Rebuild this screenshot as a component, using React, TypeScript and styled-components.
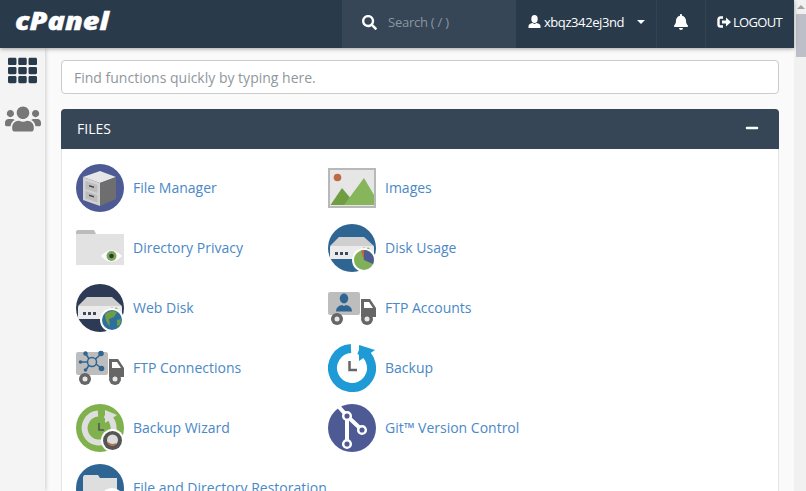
import React from "react";
import styled, { createGlobalStyle } from "styled-components";
import { FaBell, FaMinus, FaSearch, FaTh, FaUsers } from "react-icons/fa";

const GlobalStyle = createGlobalStyle`
    html, body {
        margin: 0;
        height: 100%;
        overflow: hidden;
    }
    body {
        font-family: "Open Sans", "Liberation Sans", sans-serif;
        font-size: 14px;
        background: #fafafa;
    }
`;

const Shell = styled.div`
    display: flex;
    height: 100vh;
    overflow: hidden;
`;

const Page = styled.div`
    flex: 1;
    min-width: 0;
    display: flex;
    flex-direction: column;
`;

const Scrollbar = styled.div`
    width: 12px;
    flex: none;
    background: #f1f1f1;
    display: flex;
    flex-direction: column;
    align-items: flex-end;
`;

const ScrollArrow = styled.div`
    width: 0;
    height: 0;
    margin: 5px 1px 5px 0;
    border-left: 4px solid transparent;
    border-right: 4px solid transparent;
    border-bottom: 4px solid #a3a3a3;
`;

const ScrollThumb = styled.div`
    width: 10px;
    height: 43px;
    background: #bcbfc7;
`;

const Header = styled.header`
    height: 48px;
    flex: none;
    display: flex;
    background: #293a4a;
    box-shadow: 0 1px 4px rgba(0, 0, 0, 0.35);
    position: relative;
    z-index: 2;
    color: #fff;
`;

const Logo = styled.a`
    margin-left: 15px;
    margin-right: auto;
    align-self: center;
    font-size: 24px;
    line-height: 30px;
    font-weight: 800;
    font-style: italic;
    margin-top: -6px;
    color: #fff;
    -webkit-text-stroke: 0.4px #fff;
    transform: scaleX(1.2);
    transform-origin: left center;
`;

const SearchBlock = styled.div`
    width: 174px;
    display: flex;
    align-items: center;
    padding: 0 0 4px 20px;
    box-sizing: border-box;
    gap: 11px;
    background: #364656;
    font-size: 13px;
    letter-spacing: -0.25px;
    color: #8b96a0;
    margin-right: 1px;
`;

const HeaderCell = styled.div<{ $width: number }>`
    width: ${(p) => p.$width}px;
    box-sizing: border-box;
    padding-bottom: 5px;
    display: flex;
    align-items: center;
    justify-content: center;
    border-right: 1px solid #33444f;
    font-size: 13px;
    letter-spacing: -0.4px;
`;

const LogoutCell = styled(HeaderCell)`
    justify-content: flex-start;
    padding-left: 11px;
    border-right: 0;
    letter-spacing: -0.7px;
`;

const Caret = styled.span`
    width: 0;
    height: 0;
    margin-left: 13px;
    border-left: 4px solid transparent;
    border-right: 4px solid transparent;
    border-top: 4px solid #fff;
`;

const Body = styled.div`
    flex: 1;
    display: flex;
    min-height: 0;
`;

const Sidebar = styled.nav`
    width: 45px;
    flex: none;
    display: flex;
    flex-direction: column;
    align-items: center;
    padding-top: 8px;
    gap: 16px;
    background: #f4f4f4;
    box-shadow: 1px 0 4px rgba(0, 0, 0, 0.18);
    position: relative;
    z-index: 1;
`;

const SideLink = styled.a<{ $color: string }>`
    display: flex;
    color: ${(p) => p.$color};
`;

const Main = styled.main`
    flex: 1;
    min-width: 0;
    padding: 12px 15px 0 16px;
`;

const QuickFind = styled.input`
    display: block;
    width: 100%;
    height: 34px;
    box-sizing: border-box;
    padding: 0 12px;
    border: 1px solid #ccc;
    border-radius: 4px;
    background: #fff;
    font: inherit;
    color: #555;
    &::placeholder {
        color: #8f979e;
        opacity: 1;
    }
`;

const Panel = styled.section`
    margin-top: 15px;
    background: #fff;
    border: 1px solid #e4e4e4;
    border-top: 0;
    border-radius: 4px 4px 0 0;
`;

const PanelHead = styled.div`
    height: 40px;
    box-sizing: border-box;
    margin: 0 -1px;
    padding: 0 20px 2px 16px;
    display: flex;
    align-items: center;
    justify-content: space-between;
    background: #364656;
    border-radius: 4px 4px 0 0;
    color: #fff;
    font-size: 14px;
`;

const ItemGrid = styled.div`
    display: grid;
    grid-template-columns: repeat(auto-fill, 252px);
    grid-auto-rows: 48px;
    row-gap: 12px;
    padding: 15px 14px 12px;
`;

const Item = styled.a`
    display: flex;
    align-items: center;
    gap: 9px;
    color: #4a88c7;
    font-size: 14px;
    white-space: nowrap;
`;

const ItemLabel = styled.span`
    margin-bottom: 2px;
`;

const Svg = (props: { children: React.ReactNode }) => (
    <svg width="48" height="48" viewBox="0 0 48 48">
        {props.children}
    </svg>
);

const Server = () => (
    <>
        <polygon points="11,13 36,13 46,22 2,22" fill="#cfcfcf" />
        <rect x="2" y="22" width="44" height="13" rx="1" fill="#ebebeb" />
        <rect x="7" y="28" width="3" height="3" fill="#3c4a5c" />
        <rect x="12" y="28" width="3" height="3" fill="#3c4a5c" />
        <rect x="17" y="28" width="3" height="3" fill="#3c4a5c" />
        <circle cx="36" cy="25" r="1.5" fill="#c9633a" />
        <circle cx="40" cy="25" r="1.5" fill="#7eb05a" />
    </>
);

const Truck = (props: { children: React.ReactNode }) => (
    <Svg>
        <rect x="0" y="8" width="32" height="23" rx="2" fill="#bdbdbd" />
        <path d="M33 15 H42 L48 24 V33 H33 Z" fill="#666" />
        <path d="M36 18 H41 L45 24 H36 Z" fill="#fff" />
        <circle cx="9" cy="35" r="6" fill="#666" />
        <circle cx="9" cy="35" r="2.5" fill="#e8e8e8" />
        <circle cx="39" cy="35" r="6" fill="#666" />
        <circle cx="39" cy="35" r="2.5" fill="#e8e8e8" />
        {props.children}
    </Svg>
);

const FileManagerIcon = () => (
    <Svg>
        <circle cx="24" cy="24" r="24" fill="#4d5a94" />
        <polygon points="7,13 24,7 40,13 24,19" fill="#e6e6e6" />
        <polygon points="7,13 24,19 24,42 7,36" fill="#d2d2d2" />
        <polygon points="24,19 40,13 40,35 24,42" fill="#6e6e6e" />
        <polygon points="9.5,17 21.5,21 21.5,29 9.5,25" fill="#bdbdbd" />
        <polygon points="9.5,27 21.5,31 21.5,38.5 9.5,34.5" fill="#bdbdbd" />
        <polygon points="13,21 18,22.6 18,24 13,22.4" fill="#444" />
        <polygon points="13,30.5 18,32.1 18,33.5 13,31.9" fill="#444" />
    </Svg>
);

const DirectoryPrivacyIcon = () => (
    <Svg>
        <path d="M0 8 Q0 6 2 6 H18 L20 10 V11 H0 Z" fill="#bcbcbc" />
        <rect x="0" y="10" width="48" height="31" fill="#e2e2e2" />
        <path d="M25 32 Q35 21 46 32 Q35 43 25 32 Z" fill="#fff" />
        <circle cx="35.5" cy="32" r="5" fill="#7ea65a" />
        <circle cx="35.5" cy="32" r="2.3" fill="#2f3b2a" />
    </Svg>
);

const ImagesIcon = () => (
    <Svg>
        <rect x="1" y="5" width="46" height="38" fill="#e6e6e6" stroke="#b8b8b8" strokeWidth="2" />
        <circle cx="9.5" cy="13.5" r="3.8" fill="#bd6a42" />
        <polygon points="2.5,41 14,24 24,36 20,41" fill="#6f9d41" />
        <polygon points="16,41 36,14 46,31 46,41" fill="#86b55c" />
    </Svg>
);

const DiskUsageIcon = () => (
    <Svg>
        <circle cx="24" cy="24" r="24" fill="#2f6593" />
        <Server />
        <circle cx="36" cy="36" r="12" fill="#fff" />
        <circle cx="36" cy="36" r="10" fill="#7fb05a" />
        <path d="M36 36 L36 26 A10 10 0 0 1 45 40 Z" fill="#4d5a94" />
        <path d="M36 36 L33 26.5 L36 26 Z" fill="#c9633a" />
    </Svg>
);

const WebDiskIcon = () => (
    <Svg>
        <circle cx="24" cy="24" r="24" fill="#2c3a56" />
        <Server />
        <circle cx="36" cy="36" r="12" fill="#fff" />
        <circle cx="36" cy="36" r="10" fill="#2f6f9e" />
        <path d="M29 30 Q34 25 41 28 L38 33 L33 35 L34 42 Q29 38 29 30 Z" fill="#6f9d41" />
        <path d="M41 36 L45 35 L44 41 L41 42 Z" fill="#6f9d41" />
    </Svg>
);

const FtpConnectionsIcon = () => (
    <Truck>
        <g stroke="#2f6593" strokeWidth="1.5" fill="none">
            <circle cx="16" cy="18" r="4.5" />
            <path d="M13 15 L10 10 M19.5 15 L25 10 M20 20 L25 24 M12 18 H5 M13 21 L10 26" />
        </g>
        <g fill="#2f6593">
            <circle cx="9.5" cy="9.5" r="2.2" />
            <circle cx="25" cy="9.5" r="2.8" />
            <circle cx="25.5" cy="24.5" r="2.8" />
            <circle cx="4.5" cy="18" r="1.8" />
            <circle cx="9.5" cy="26" r="1.8" />
        </g>
    </Truck>
);

const FtpAccountsIcon = () => (
    <Truck>
        <g fill="#2f6593">
            <ellipse cx="16" cy="14.5" rx="4.2" ry="5" />
            <path d="M8 27.5 Q8 22 14 21 L16 22 L18 21 Q24 22 24 27.5 Z" />
        </g>
    </Truck>
);

const BackupIcon = () => (
    <Svg>
        <path d="M31 5.8 A19.5 19.5 0 1 1 23 4.53" fill="none" stroke="#1e9ad6" strokeWidth="9" />
        <polygon points="31,1 47,6 31,17" fill="#1e9ad6" />
        <path d="M21.5 17 V26 H29" fill="none" stroke="#666" strokeWidth="2.5" />
    </Svg>
);

const BackupWizardIcon = () => (
    <Svg>
        <circle cx="24" cy="24" r="24" fill="#7fb24c" />
        <path d="M29 10.8 A14.5 14.5 0 1 1 22 9.6" fill="none" stroke="#dedede" strokeWidth="6" />
        <polygon points="29,6 41,11 29,19" fill="#dedede" />
        <path d="M23 19 V26 H28" fill="none" stroke="#555" strokeWidth="1.6" />
        <circle cx="36.5" cy="36.5" r="11.5" fill="#fff" />
        <circle cx="36.5" cy="36.5" r="9.5" fill="#555" />
        <circle cx="36.5" cy="36" r="5.5" fill="#dcdcdc" />
        <path d="M32 39 Q35 42 40 40" fill="none" stroke="#bd6a42" strokeWidth="1.8" />
    </Svg>
);

const GitIcon = () => (
    <Svg>
        <circle cx="24" cy="24" r="24" fill="#4d5a94" />
        <path d="M11 3 L19 12 V40 M19 12 L34 26" fill="none" stroke="#fff" strokeWidth="4" />
        <circle cx="19" cy="12" r="3.8" fill="#4d5a94" stroke="#fff" strokeWidth="2.5" />
        <circle cx="34" cy="26" r="3.8" fill="#4d5a94" stroke="#fff" strokeWidth="2.5" />
        <circle cx="19" cy="40" r="3.8" fill="#4d5a94" stroke="#fff" strokeWidth="2.5" />
    </Svg>
);

const RestorationIcon = () => (
    <Svg>
        <circle cx="24" cy="24" r="24" fill="#2f6593" />
        <path d="M7 14 Q7 11 9 11 H22 L24 14 H41 V40 H7 Z" fill="#dedede" />
        <circle cx="36" cy="36" r="12" fill="#fff" />
    </Svg>
);

const items = [
    { name: "File Manager", icon: <FileManagerIcon /> },
    { name: "Images", icon: <ImagesIcon /> },
    { name: "Directory Privacy", icon: <DirectoryPrivacyIcon /> },
    { name: "Disk Usage", icon: <DiskUsageIcon /> },
    { name: "Web Disk", icon: <WebDiskIcon /> },
    { name: "FTP Accounts", icon: <FtpAccountsIcon /> },
    { name: "FTP Connections", icon: <FtpConnectionsIcon /> },
    { name: "Backup", icon: <BackupIcon /> },
    { name: "Backup Wizard", icon: <BackupWizardIcon /> },
    { name: "Git™ Version Control", icon: <GitIcon /> },
    { name: "File and Directory Restoration", icon: <RestorationIcon /> },
];

const UserGlyph = () => (
    <svg width="13" height="13" viewBox="0 0 13 13" style={{ marginRight: 3 }}>
        <ellipse cx="6.5" cy="4" rx="3.2" ry="4" fill="#fff" />
        <path d="M0.5 13 V11 Q0.5 9 4.5 8 L6.5 9 L8.5 8 Q12.5 9 12.5 11 V13 Z" fill="#fff" />
    </svg>
);

const LogoutGlyph = () => (
    <svg width="15" height="12" viewBox="0 0 15 12" style={{ marginRight: 1 }}>
        <path d="M6 1.5 H3.5 Q1.5 1.5 1.5 3.5 V8.5 Q1.5 10.5 3.5 10.5 H6" fill="none" stroke="#fff" strokeWidth="2.4" />
        <path d="M5 4.5 H9 V1.5 L14 6 L9 10.5 V7.5 H5 Z" fill="#fff" />
    </svg>
);

const App = () => (
    <Shell>
        <GlobalStyle />
        <Page>
            <Header>
                <Logo>cPanel</Logo>
                <SearchBlock>
                    <FaSearch size={15} color="#fff" />
                    <span>Search ( / )</span>
                </SearchBlock>
                <HeaderCell $width={140}>
                    <UserGlyph />
                    xbqz342ej3nd
                    <Caret />
                </HeaderCell>
                <HeaderCell $width={49}>
                    <FaBell size={16} />
                </HeaderCell>
                <LogoutCell $width={88}>
                    <LogoutGlyph />
                    LOGOUT
                </LogoutCell>
            </Header>
            <Body>
                <Sidebar>
                    <SideLink $color="#293a4a">
                        <FaTh size={29} />
                    </SideLink>
                    <SideLink $color="#777">
                        <FaUsers size={36} />
                    </SideLink>
                </Sidebar>
                <Main>
                    <QuickFind placeholder="Find functions quickly by typing here." />
                    <Panel>
                        <PanelHead>
                            FILES
                            <FaMinus size={14} />
                        </PanelHead>
                        <ItemGrid>
                            {items.map((item) => (
                                <Item key={item.name}>
                                    {item.icon}
                                    <ItemLabel>{item.name}</ItemLabel>
                                </Item>
                            ))}
                        </ItemGrid>
                    </Panel>
                </Main>
            </Body>
        </Page>
        <Scrollbar>
            <ScrollArrow />
            <ScrollThumb />
        </Scrollbar>
    </Shell>
);

export default App;
